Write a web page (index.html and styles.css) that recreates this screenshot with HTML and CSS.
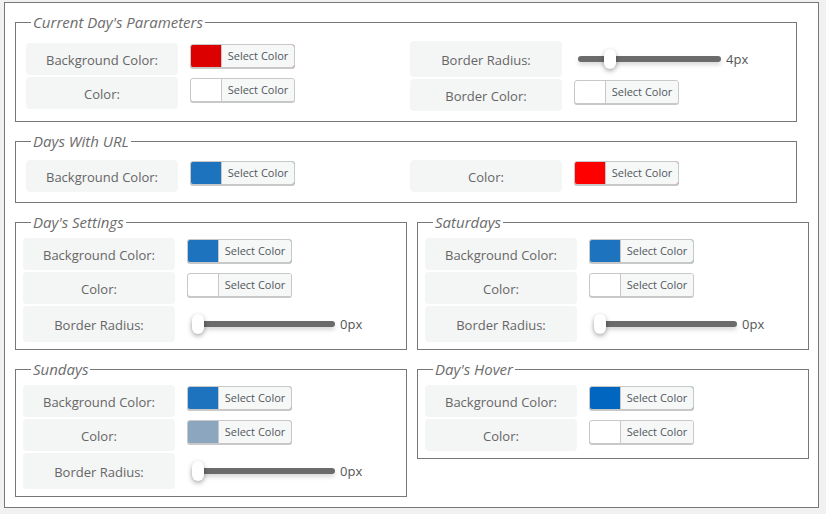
FILE: index.html
```html
<!DOCTYPE html>
<html lang="en">
<head>
<meta charset="utf-8">
<title>Calendar Styles</title>
<link rel="stylesheet" href="styles.css">
</head>
<body>
<div class="wrap">
  <fieldset class="box full">
    <legend>Current Day's Parameters</legend>
    <div class="cols">
      <div class="col">
        <div class="row">
          <div class="lbl">Background Color:</div>
          <button class="picker c-red" type="button"><span>Select Color</span></button>
        </div>
        <div class="row">
          <div class="lbl">Color:</div>
          <button class="picker c-white" type="button"><span>Select Color</span></button>
        </div>
      </div>
      <div class="col">
        <div class="row slide">
          <div class="lbl">Border Radius:</div>
          <div class="range"><input type="range" min="0" max="20" value="4"><span class="val">4px</span></div>
        </div>
        <div class="row">
          <div class="lbl">Border Color:</div>
          <button class="picker c-white" type="button"><span>Select Color</span></button>
        </div>
      </div>
    </div>
  </fieldset>

  <fieldset class="box full">
    <legend>Days With URL</legend>
    <div class="cols">
      <div class="col">
        <div class="row">
          <div class="lbl">Background Color:</div>
          <button class="picker c-blue" type="button"><span>Select Color</span></button>
        </div>
      </div>
      <div class="col">
        <div class="row">
          <div class="lbl">Color:</div>
          <button class="picker c-bright" type="button"><span>Select Color</span></button>
        </div>
      </div>
    </div>
  </fieldset>

  <div class="pair">
    <fieldset class="box half">
      <legend>Day's Settings</legend>
      <div class="col">
        <div class="row">
          <div class="lbl">Background Color:</div>
          <button class="picker c-blue" type="button"><span>Select Color</span></button>
        </div>
        <div class="row">
          <div class="lbl">Color:</div>
          <button class="picker c-white" type="button"><span>Select Color</span></button>
        </div>
        <div class="row slide">
          <div class="lbl">Border Radius:</div>
          <div class="range"><input type="range" min="0" max="20" value="0"><span class="val">0px</span></div>
        </div>
      </div>
    </fieldset>
    <fieldset class="box half">
      <legend>Saturdays</legend>
      <div class="col">
        <div class="row">
          <div class="lbl">Background Color:</div>
          <button class="picker c-blue" type="button"><span>Select Color</span></button>
        </div>
        <div class="row">
          <div class="lbl">Color:</div>
          <button class="picker c-white" type="button"><span>Select Color</span></button>
        </div>
        <div class="row slide">
          <div class="lbl">Border Radius:</div>
          <div class="range"><input type="range" min="0" max="20" value="0"><span class="val">0px</span></div>
        </div>
      </div>
    </fieldset>
  </div>

  <div class="pair">
    <fieldset class="box half">
      <legend>Sundays</legend>
      <div class="col">
        <div class="row">
          <div class="lbl">Background Color:</div>
          <button class="picker c-blue" type="button"><span>Select Color</span></button>
        </div>
        <div class="row">
          <div class="lbl">Color:</div>
          <button class="picker c-slate" type="button"><span>Select Color</span></button>
        </div>
        <div class="row slide">
          <div class="lbl">Border Radius:</div>
          <div class="range"><input type="range" min="0" max="20" value="0"><span class="val">0px</span></div>
        </div>
      </div>
    </fieldset>
    <fieldset class="box half">
      <legend>Day's Hover</legend>
      <div class="col">
        <div class="row">
          <div class="lbl">Background Color:</div>
          <button class="picker c-hover" type="button"><span>Select Color</span></button>
        </div>
        <div class="row">
          <div class="lbl">Color:</div>
          <button class="picker c-white" type="button"><span>Select Color</span></button>
        </div>
      </div>
    </fieldset>
  </div>
</div>
</body>
</html>
```

FILE: styles.css
```css
html, body {
  margin: 0;
  padding: 0;
  background: #f1f1f1;
}

body {
  font-family: "Open Sans", "Liberation Sans", sans-serif;
  color: #666;
  padding: 2px 0 0 4px;
}

.wrap {
  box-sizing: border-box;
  width: 815px;
  background: #fff;
  border: 1px solid #777;
  padding: 9px 9px 10px 10px;
  display: flex;
  flex-direction: column;
  gap: 9px;
}

.box {
  margin: 0;
  min-width: 0;
  box-sizing: border-box;
  border: 1px solid #777;
}

.box legend {
  font-size: 15px;
  font-style: italic;
  line-height: 20px;
  color: #6d6d6d;
  padding: 0 2px;
}

.full {
  width: 782px;
  padding: 9px 10px 10px 10px;
}

.full legend {
  margin-left: 5px;
}

.half {
  width: 392px;
  padding: 6px 7px 7px 7px;
}

.half legend {
  margin-left: 8px;
}

.pair {
  display: flex;
  gap: 10px;
  align-items: flex-start;
}

.cols {
  display: grid;
  grid-template-columns: 384px 1fr;
  align-items: center;
}

.col {
  display: flex;
  flex-direction: column;
  gap: 2px;
}

.row {
  display: flex;
  align-items: flex-start;
  gap: 12px;
}

.lbl {
  box-sizing: border-box;
  flex: 0 0 152px;
  height: 32px;
  padding-top: 2px;
  display: flex;
  align-items: center;
  justify-content: center;
  background: #f4f5f5;
  border-radius: 4px;
  font-size: 13px;
  color: #666;
}

.slide .lbl {
  height: 36px;
}

.picker {
  box-sizing: border-box;
  margin: 1px 0 0 0;
  width: 105px;
  height: 24px;
  padding: 0 0 0 30px;
  border: 1px solid #c8c8c8;
  border-radius: 3px;
  box-shadow: 0 1px 0 #c8c8c8;
  display: flex;
  cursor: pointer;
  font-family: inherit;
}

.picker span {
  flex: 1;
  height: 22px;
  line-height: 21px;
  background: #f6f7f7;
  border-left: 1px solid #c8c8c8;
  border-radius: 0 2px 2px 0;
  font-size: 11px;
  color: #50575e;
  text-align: center;
}

.c-red { background: #dd0000; }
.c-bright { background: #ff0000; }
.c-white { background: #fff; }
.c-blue { background: #1e73be; }
.c-slate { background: #8ba6be; }
.c-hover { background: #0066bf; }

.range {
  height: 36px;
  margin-left: 4px;
  display: flex;
  align-items: center;
  gap: 5px;
}

.half .range {
  margin-left: 5px;
}

.range input {
  -webkit-appearance: none;
  appearance: none;
  width: 143px;
  height: 6px;
  margin: 0;
  background: #6b6b6b;
  border-radius: 3px;
  box-shadow: 0 3px 4px rgba(0, 0, 0, 0.15);
  outline: none;
}

.range input::-webkit-slider-thumb {
  -webkit-appearance: none;
  appearance: none;
  width: 12px;
  height: 20px;
  border-radius: 6px;
  background: #fff;
  box-shadow: 0 2px 5px rgba(0, 0, 0, 0.35);
  cursor: pointer;
}

.val {
  font-size: 13px;
  color: #555;
}
```
